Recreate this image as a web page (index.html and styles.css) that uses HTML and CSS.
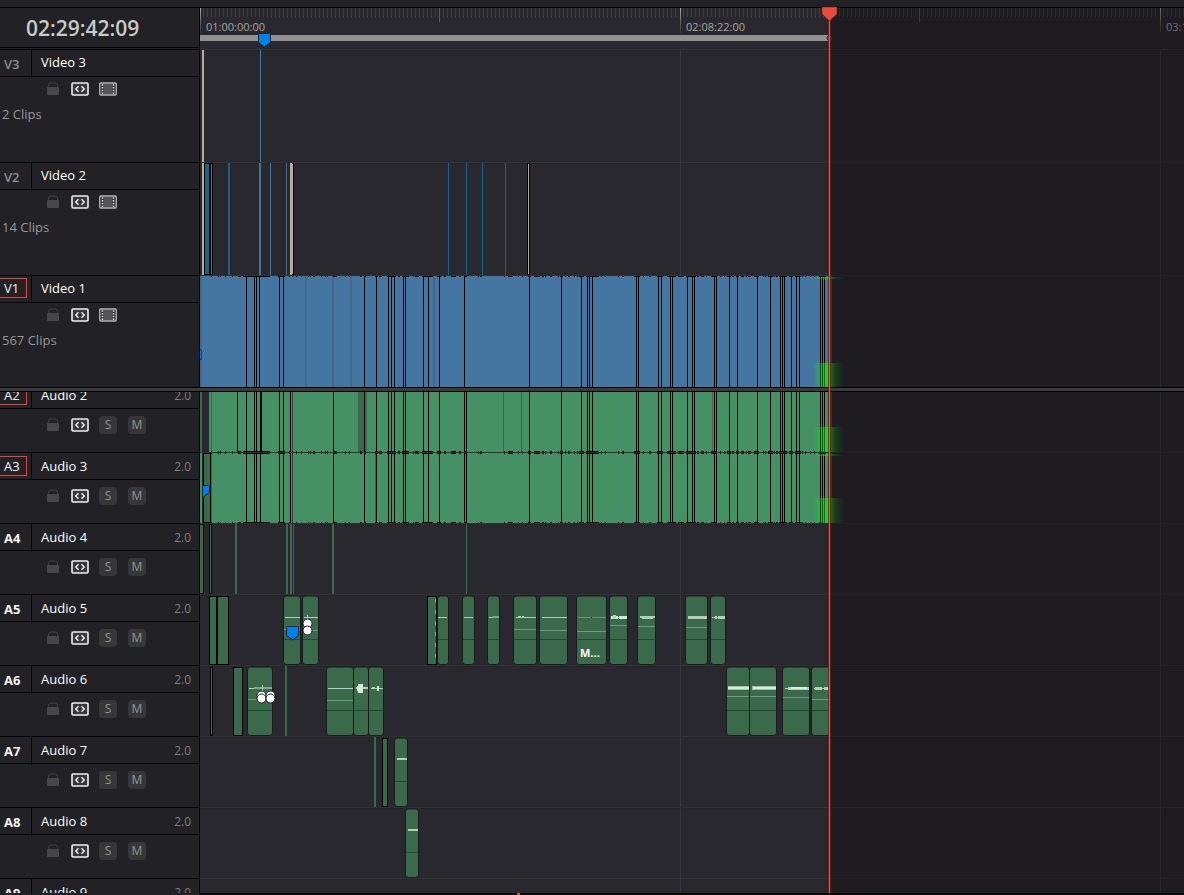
FILE: index.html
```html
<!DOCTYPE html>
<html lang="en">
<head>
<meta charset="utf-8">
<title>Timeline</title>
<link rel="stylesheet" href="styles.css">
</head>
<body>
<svg class="defs" aria-hidden="true">
  <defs>
    <linearGradient id="glow">
      <stop offset="0" stop-color="#1fd61f" stop-opacity="0.05"/>
      <stop offset="0.15" stop-color="#1fd61f" stop-opacity="0.35"/>
      <stop offset="0.25" stop-color="#1fd61f" stop-opacity="0.65"/>
      <stop offset="0.36" stop-color="#1fd61f" stop-opacity="1"/>
      <stop offset="0.48" stop-color="#1fc81f" stop-opacity="0.95"/>
      <stop offset="0.58" stop-color="#1fb41f" stop-opacity="0.7"/>
      <stop offset="0.75" stop-color="#1f9a1f" stop-opacity="0.3"/>
      <stop offset="1" stop-color="#1f8a1f" stop-opacity="0"/>
    </linearGradient>
    <linearGradient id="majorTick" x1="0" y1="0" x2="0" y2="1">
      <stop offset="0" stop-color="#a5a5a5"/>
      <stop offset="1" stop-color="#a5a5a5" stop-opacity="0.1"/>
    </linearGradient>
    <symbol id="marker" viewBox="0 0 13 15">
      <path d="M1.500.5h10a1 1 0 0 1 1 1v8L6.500 14 .5 9.500v-8a1 1 0 0 1 1-1z" fill="#0080e6" stroke="#12263c"/>
    </symbol>
    <symbol id="lock" viewBox="0 0 14 14">
      <path d="M2.500 4.500V3.500q0-2.500 2.500-2.500h4q2.500 0 2.500 2.500V6" fill="none" stroke="#434345"/>
      <rect x="1" y="5" width="12" height="8" rx="1" fill="#474749"/>
    </symbol>
    <symbol id="auto" viewBox="0 0 18 14">
      <rect x="1" y="1" width="16" height="12" rx="1" fill="#38383c" stroke="#f0f0f0" stroke-width="1.600"/>
      <path d="M7.500 4.300 4.800 7l2.700 2.700M10.500 4.300 13.200 7l-2.700 2.700" fill="none" stroke="#f4f4f4" stroke-width="1.400"/>
    </symbol>
    <symbol id="film" viewBox="0 0 18 14">
      <rect x=".7" y="1" width="16.600" height="12" rx="1" fill="#343437" stroke="#b4b4b4" stroke-width="1.300"/>
      <rect x="5" y="2" width="8" height="10" fill="#555557"/>
      <path d="M3.500 2.300v9.700M14.500 2.300v9.700" stroke="#ececec" stroke-width="1.500" stroke-dasharray="1.500 1.200"/>
    </symbol>
  </defs>
</svg>
<div class="app">
  <div class="topbar"></div>
  <main class="editor">
    <div class="ruler-row">
      <div class="timecode">02:29:42:09</div>
      <div class="ruler">
        <svg class="ruler-marks" id="ruler" role="img" aria-label="Time ruler"></svg>
      </div>
    </div>
    <section class="tracks tracks-video" id="video" aria-label="Video tracks"></section>
    <div class="divider"></div>
    <section class="audio-view" aria-label="Audio tracks">
      <div class="tracks tracks-audio" id="audio"></div>
    </section>
    <div class="shade"></div>
    <div class="playhead">
      <svg class="playhead-cap" viewBox="0 0 17 14" aria-hidden="true"><path d="M1 0h15v7l-7 6.500h-1L1 7z" fill="#e94b3c" stroke="#5a211d" stroke-width=".6"/></svg>
    </div>
  </main>
  <div class="bottom"><span class="bottom-mark"></span></div>
</div>
<script src="script.js"></script>
</body>
</html>
```

FILE: styles.css
```css
* { box-sizing: border-box; }

body {
  margin: 0;
  background: #222126;
  color: #f2f2f2;
  font: 13px/18px "Open Sans", "Noto Sans", sans-serif;
}

.defs { position: absolute; width: 0; height: 0; }

.app {
  display: flex;
  flex-direction: column;
  height: 100vh;
  overflow: hidden;
}

.topbar { flex: none; height: 8px; border-bottom: 1px solid #060606; }

.editor {
  position: relative;
  display: flex;
  flex-direction: column;
  flex: 1;
  min-height: 0;
}

.ruler-row {
  display: grid;
  grid-template-columns: 200px 1fr;
  flex: none;
  height: 42px;
}

.timecode {
  height: 42px;
  padding: 1px 0 0 26px;
  border-right: 1px solid #060606;
  border-bottom: 1px solid #060606;
  box-shadow: inset 0 -1px #222126, inset 0 -2px #060606;
  color: #c9c9c9;
  font-size: 21px;
  font-weight: 600;
  line-height: 38px;
}

.ruler { background: #29282e; border-bottom: 1px solid #333237; overflow: hidden; }
.ruler-marks, .lane-clips { display: block; width: 100%; height: 100%; }
.ruler-text { fill: #a6a6a6; font-size: 11px; }

.audio-view { flex: 1; min-height: 0; overflow: hidden; }
.tracks-video { flex: none; }
.tracks-audio { margin-top: -10px; }

.track {
  display: grid;
  grid-template-columns: 200px 1fr;
  height: 113px;
}
.tracks-video .track:last-child { height: 111px; }
.tracks-audio .track { height: 71px; }

.track-head {
  display: flex;
  flex-direction: column;
  min-height: 0;
  border-right: 1px solid #060606;
  border-bottom: 1px solid #060606;
}

.title-row {
  display: grid;
  grid-template-columns: 32px 1fr auto;
  flex: none;
  height: 27px;
  border-bottom: 1px solid #060606;
  align-items: stretch;
  line-height: 25px;
}
.tracks-audio .title-row { line-height: 27px; }

.track-id {
  border: 0;
  border-right: 1px solid #060606;
  padding: 0 0 0 4px;
  background: none;
  color: #8d8d8f;
  font: 600 13px/28px "Open Sans", "Noto Sans", sans-serif;
  text-align: left;
}
.track-id-audio { color: #f4f4f4; font-weight: 700; }
.track-id-target { padding: 2px 4px 4px 0; color: #f4f4f4; font-weight: 500; }
.target-box {
  display: block;
  height: 20px;
  padding-left: 4px;
  border: 1px solid #d94a3f;
  border-left: 0;
  line-height: 18px;
}

.track-name { padding-left: 9px; font-weight: 500; color: #fff; }
.channels { padding-right: 8px; color: #7d7d80; font-size: 12px; }

.controls { display: flex; padding: 3px 0 0 46px; height: 22px; }
.tracks-audio .controls { padding-top: 7px; height: 25px; }

.control {
  display: flex;
  align-items: center;
  justify-content: center;
  width: 18px;
  height: 18px;
  padding: 0;
  border: 0;
  background: none;
}
.control-lock { width: 14px; margin-right: 11px; }
.control-auto { margin-right: 10px; }
.control-letter {
  margin-right: 11px;
  border-radius: 4px;
  background: #373739;
  color: #949496;
  font: 500 12px/18px "Open Sans", "Noto Sans", sans-serif;
}
.icon { display: block; width: 18px; height: 14px; }
.control-lock .icon { width: 14px; }

.clip-count { margin: 6px 0 0 2px; color: #979799; }

.lane {
  min-width: 0;
  border-bottom: 1px solid #323136;
  background: #29282e;
  overflow: hidden;
}
.tracks-video .track:last-child .track-head,
.tracks-video .track:last-child .lane { border-bottom: 0; }

.clip-label { fill: #fff; font-size: 11px; font-weight: 700; }

.divider {
  position: relative;
  z-index: 2;
  flex: none;
  height: 5px;
  border-top: 1px solid #030303;
  border-bottom: 1px solid #030303;
  background: #3b3b3b;
}

.shade {
  position: absolute;
  top: 0;
  right: 0;
  bottom: 0;
  left: 830px;
  background: rgba(10, 9, 11, 0.36);
}

.playhead {
  position: absolute;
  z-index: 3;
  top: 0;
  bottom: 0;
  left: 828px;
  width: 3px;
  border: solid rgba(120, 30, 25, 0.7);
  border-width: 0 1px;
  background: #e45649;
  background-clip: padding-box;
}
.playhead-cap { position: absolute; top: -1px; left: -8px; width: 17px; height: 14px; }

.bottom { position: relative; flex: none; height: 2px; margin-left: 200px; background: #080607; }
.bottom-mark { position: absolute; left: 317px; top: 0; width: 3px; height: 2px; background: #e94b3c; }
```

FILE: script.js
```js
// Horizontal positions are timeline pixels; lanes begin at ORIGIN.
const ORIGIN = 200;
const END = 828;
const C = {
  tan: '#b9ad96', teal: '#1a6287', blue: '#4476a1', dimBlue: '#466786',
  green: '#459065', dark: '#3a6a4b', black: '#050505', bg: '#29282e'
};

const rect = (x, y, w, h, fill) =>
  `<rect x="${x}" y="${y}" width="${w}" height="${h}" fill="${fill}" shape-rendering="crispEdges"/>`;
const bars = (list, h) => list.map(([x, w, c]) => rect(x, 0, w, h, C[c])).join('');
const marker = (x, y) => `<use href="#marker" x="${x}" y="${y}" width="13" height="15"/>`;
const keys = list => list.map(([x, y]) =>
  `<circle cx="${x + .5}" cy="${y + .5}" r="4.500" fill="#fff" stroke="#1b1b1b"/>`).join('');
const box = (x, w) => rect(x, 1, w, 69, C.black) + rect(x + 1, 2, w - 2, 67, C.dark);

// A rounded audio clip: left, right, volume line, waveform segments [x, width, thickness, colour].
function clip(l, r, vol, wave) {
  let s = `<rect x="${l + .5}" y="1" width="${r - l - 1}" height="68.500" rx="3" fill="${C.dark}" stroke="#191b1c"/>`;
  s += rect(l + 1, 44, r - l - 2, 1, '#28482f');
  if (vol) s += rect(l + 1, vol, r - l - 2, 1, '#739680');
  wave.forEach(([x, w, t, c]) => { s += rect(x, 22 - Math.floor(t / 2), w, t, c || '#b4cdbd'); });
  return s;
}

const cuts = [254, 256, 279, 283, 364, 376, 388, 391, 394, 403, 405, 423, 428, 439, 464,
  529, 561, 581, 587, 589, 592, 636, 638, 658, 661, 670, 672, 687, 692, 694, 714, 716, 729,
  737, 757, 770, 780, 782, 784, 791, 796, 799, 820, 822, 824, 246];
const dashes = [[211, 1], [218, 1], [220, 1], [225, 1], [232, 1], [238, 3], [243, 27], [278, 7],
  [289, 1], [292, 1], [296, 1], [301, 1], [308, 1], [310, 1], [313, 2], [321, 1], [325, 1], [327, 1],
  [333, 4], [345, 1], [349, 1], [360, 2], [364, 2], [375, 3], [379, 3], [387, 9], [398, 2], [402, 7],
  [413, 1], [415, 4], [422, 11], [437, 4], [444, 2], [451, 5], [459, 2], [464, 3], [478, 1], [480, 2],
  [504, 1], [508, 5], [518, 1], [522, 1], [528, 3], [534, 6], [542, 2], [545, 1], [550, 2], [558, 1],
  [560, 3], [565, 1], [568, 2], [574, 1], [577, 1], [579, 5], [586, 13], [601, 1], [605, 1], [618, 1],
  [622, 2], [634, 6], [643, 1], [649, 2], [657, 6], [667, 9], [678, 6], [686, 10], [697, 2], [701, 3],
  [706, 1], [711, 6], [720, 1], [724, 1], [727, 4], [732, 2], [736, 3], [741, 3], [746, 1], [748, 3],
  [754, 5], [763, 1], [765, 1], [768, 5], [774, 1], [776, 2], [779, 8], [789, 4], [795, 6], [802, 1],
  [805, 1], [810, 1], [814, 1], [819, 7]];

const cutLines = (extra, h) => cuts.concat(extra).map(x => rect(x, 0, 1, h, C.black)).join('');
const dashRow = y => dashes.map(([x, w]) => rect(x, y, w, 1, C.black)).join('');
const glow = (y, h) => `<rect x="814" y="${y}" width="31" height="${h}" fill="url(#glow)"/>` +
  [820, 822, 824].map(x => rect(x, y, 1, h, '#06300a99')).join('');
const edge = h => rect(827, 0, 5, h, '#5f7a2a80');

const tracks = [
  { id: 'V3', kind: 'video', name: 'Video 3', clips: '2 Clips',
    art: bars([[202, 2, 'tan'], [260, 1, 'blue']], 112) },
  { id: 'V2', kind: 'video', name: 'Video 2', clips: '14 Clips',
    art: bars([[202, 2, 'tan'], [204, 9, 'black'], [228, 2, 'teal'], [259, 2, 'blue'],
      [270, 1, 'blue'], [286, 1, 'dimBlue'], [290, 4, 'black'], [290, 2, 'tan'], [448, 1, 'teal'],
      [466, 1, 'teal'], [482, 1, 'teal'], [505, 1, 'teal'], [527, 3, 'black']], 112) +
      rect(205, 1, 4, 110, C.teal) + rect(211, 1, 1, 110, C.blue) +
      rect(292, 1, 1, 110, C.tan) + rect(528, 1, 1, 110, C.tan) },
  { id: 'V1', kind: 'video', name: 'Video 1', clips: '567 Clips', target: true,
    art: rect(ORIGIN, 0, END - ORIGIN, 111, C.blue) +
      bars([[200, 2, 'dimBlue'], [305, 2, 'dimBlue'], [332, 2, 'dimBlue'], [350, 2, 'dimBlue'],
        [433, 2, 'dimBlue']], 111) + cutLines([259], 111) +
      dashRow(0) + edge(111) + glow(1, 2) + glow(87, 24) + marker(189, 73) },
  { id: 'A2', kind: 'audio', name: 'Audio 2', target: true,
    art: bars([[200, 2, 'dark']], 70) + rect(209, 0, END - 209, 70, C.green) +
      bars([[211, 1, 'dark'], [358, 9, 'dark'], [503, 1, 'dark'], [521, 1, 'dark'], [712, 1, 'dark']], 70) +
      cutLines([237, 260, 261, 290, 333, 466], 70) + rect(292, 0, 1, 70, '#403c44') +
      dashRow(69) + edge(70) + glow(45, 25) },
  { id: 'A3', kind: 'audio', name: 'Audio 3', target: true,
    art: rect(ORIGIN, 0, END - ORIGIN, 70, C.green) +
      bars([[202, 1, 'bg'], [203, 8, 'black'], [211, 1, 'dark'], [375, 1, 'dark']], 70) +
      rect(204, 1, 6, 68, C.dark) +
      cutLines([260, 290, 333, 466], 70) + rect(292, 0, 1, 70, '#403c44') +
      dashRow(0) + dashRow(69) + edge(70) + glow(1, 2) + glow(45, 25) +
      '<path d="M203 32.500h5.500l1 1v6L203 44z" fill="#0080e6"/><path d="M203 32.500h5.500l1 1v6L203 44" fill="none" stroke="#12263c"/>' },
  { id: 'A4', kind: 'audio', name: 'Audio 4',
    art: bars([[200, 4, 'black'], [209, 3, 'black'], [235, 2, 'dark'], [286, 2, 'dark'],
      [290, 2, 'dark'], [293, 1, 'dark'], [332, 2, 'dark'], [466, 1, 'dark']], 70) +
      rect(200, 1, 3, 68, C.dark) + rect(210, 1, 1, 68, C.dark) },
  { id: 'A5', kind: 'audio', name: 'Audio 5',
    art: box(209, 8) + box(217, 12) + clip(283, 301, 34, [[285, 15, 1]]) +
      clip(302, 319, 35, [[304, 14, 1], [307, 1, 5]]) + marker(286, 31) + keys([[307, 28], [307, 35]]) +
      box(427, 10) + '<path d="M435.500 4v65" stroke="#8fa897" stroke-dasharray="4 7"/>' +
      clip(437, 449, 0, [[438, 9, 1]]) + clip(462, 475, 0, [[464, 9, 1]]) +
      clip(487, 500, 0, [[489, 10, 1], [493, 6, 2, '#7fa58d']]) +
      clip(513, 537, 34, [[516, 20, 1], [518, 3, 2], [522, 2, 2]]) +
      clip(539, 568, 35, [[542, 25, 1]]) +
      clip(576, 607, 36, [[578, 28, 1, '#6d927a'], [591, 1, 1, '#30383a']]) +
      '<text class="clip-label" x="580" y="62">M...</text>' +
      clip(609, 628, 30, [[611, 7, 3, '#d2e5da'], [618, 1, 1], [619, 8, 3, '#d2e5da'], [613, 3, 4]]) +
      clip(637, 656, 31, [[640, 15, 2], [642, 11, 3]]) +
      clip(685, 708, 32, [[688, 19, 3]]) + clip(710, 726, 0, [[712, 13, 1], [715, 2, 3], [718, 7, 3]]) },
  { id: 'A6', kind: 'audio', name: 'Audio 6',
    art: box(210, 3) + box(233, 10) + rect(285, 0, 2, 70, C.dark) +
      clip(247, 273, 33, [[249, 23, 1], [254, 18, 2, '#83a68f'], [262, 1, 6]]) +
      keys([[261, 29], [261, 32], [270, 29], [270, 32]]) +
      clip(326, 354, 34, [[328, 25, 1]]) +
      clip(353, 369, 0, [[356, 12, 2], [357, 6, 5, '#d5e8dd'], [358, 5, 9, '#d5e8dd']]) +
      clip(368, 384, 0, [[371, 12, 1], [372, 3, 2], [377, 2, 5, '#d5e8dd']]) +
      clip(726, 750, 30, [[728, 21, 4, '#9fbeab'], [728, 21, 2, '#dcebe2']]) +
      clip(749, 777, 30, [[752, 24, 4, '#9fbeab'], [753, 23, 2, '#dcebe2']]) +
      clip(782, 810, 31, [[785, 24, 1], [788, 21, 3], [791, 16, 2, '#dcebe2']]) +
      clip(811, 834, 33, [[814, 15, 1], [815, 7, 3], [824, 4, 3]]) + rect(830, 1, 5, 69, C.bg) },
  { id: 'A7', kind: 'audio', name: 'Audio 7',
    art: rect(374, 0, 2, 70, C.dark) + box(382, 6) + clip(394, 408, 0, [[397, 10, 2]]) },
  { id: 'A8', kind: 'audio', name: 'Audio 8', art: clip(405, 419, 0, [[408, 10, 2]]) },
  { id: 'A9', kind: 'audio', name: 'Audio 9', art: '' }
];

const icon = (id, cls, label) =>
  `<button class="control ${cls}" aria-label="${label}"><svg class="icon"><use href="#${id}"/></svg></button>`;
const letter = (t, label) => `<button class="control control-letter" aria-label="${label}">${t}</button>`;

function trackRow(t) {
  const video = t.kind === 'video';
  const cls = t.target ? 'track-id-target' : video ? '' : 'track-id-audio';
  const tag = t.target ? `<span class="target-box">${t.id}</span>` : t.id;
  const grid = [680, 1160].map(x => rect(x, 0, 1, 113, '#38373c')).join('');
  return `<div class="track">
    <div class="track-head">
      <div class="title-row">
        <button class="track-id ${cls}">${tag}</button>
        <span class="track-name">${t.name}</span>
        ${video ? '' : '<span class="channels">2.0</span>'}
      </div>
      <div class="controls">
        ${icon('lock', 'control-lock', 'Lock track')}${icon('auto', 'control-auto', 'Auto select')}
        ${video ? icon('film', '', 'Enable track') : letter('S', 'Solo') + letter('M', 'Mute')}
      </div>
      ${video ? `<div class="clip-count">${t.clips}</div>` : ''}
    </div>
    <div class="lane"><svg class="lane-clips"><g transform="translate(${-ORIGIN} 0)">
      ${rect(200, 0, 4000, 1, '#26252a')}${grid}${t.art}</g></svg></div>
  </div>`;
}

for (const kind of ['video', 'audio']) {
  document.getElementById(kind).innerHTML =
    tracks.filter(t => t.kind === kind).map(trackRow).join('');
}

let ruler = '';
for (let x = 204; x < 4000; x += 4) {
  const step = (x - ORIGIN) % 480;
  if (step === 0) ruler += `<rect x="${x}" y="0" width="1" height="25" fill="url(#majorTick)"/>`;
  else if (step === 240) ruler += rect(x - 1, 0, 1, 14, '#5c5c61');
  else ruler += rect(x - 1, 0, 1, 9, '#3f3e43');
}
ruler += '<rect x="200" y="0" width="1" height="25" fill="url(#majorTick)"/>';
[['01:00:00:00', 206], ['02:08:22:00', 686], ['03:16:44:00', 1166]].forEach(([t, x]) => {
  ruler += `<text class="ruler-text" x="${x}" y="23">${t}</text>`;
});
ruler += rect(ORIGIN, 27, END - ORIGIN, 6, '#929191') +
  '<circle cx="829.500" cy="30" r="2.500" fill="#777" stroke="#2a2a2a"/>' + marker(258, 25);
document.getElementById('ruler').innerHTML = `<g transform="translate(${-ORIGIN} 0)">${ruler}</g>`;
```
